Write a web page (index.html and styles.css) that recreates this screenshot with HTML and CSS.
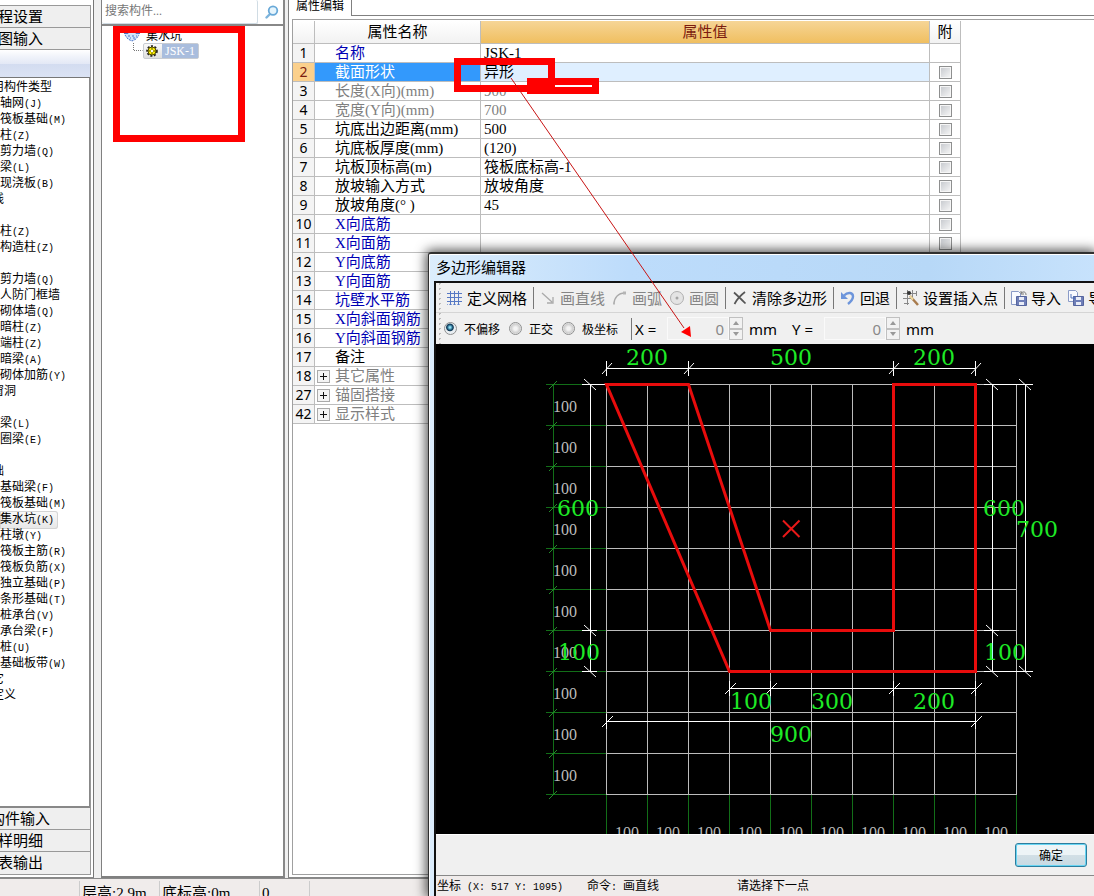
FILE: index.html
```html
<!DOCTYPE html>
<html lang="zh-CN">
<head>
<meta charset="utf-8">
<title>多边形编辑器</title>
<link rel="stylesheet" href="styles.css">
</head>
<body>
<div class="app">
  <div class="workspace">
    <nav class="sidebar" aria-label="导航">
      <div class="sidebar-box">
        <button class="side-tab">程设置</button>
        <button class="side-tab">图输入</button>
        <div class="side-band"></div>
        <ul class="type-list">
          <li class="group">用构件类型</li>
          <li>轴网<i>(J)</i></li>
          <li>筏板基础<i>(M)</i></li>
          <li>柱<i>(Z)</i></li>
          <li>剪力墙<i>(Q)</i></li>
          <li>梁<i>(L)</i></li>
          <li>现浇板<i>(B)</i></li>
          <li class="group">线</li>
          <li></li>
          <li>柱<i>(Z)</i></li>
          <li>构造柱<i>(Z)</i></li>
          <li></li>
          <li>剪力墙<i>(Q)</i></li>
          <li>人防门框墙</li>
          <li>砌体墙<i>(Q)</i></li>
          <li>暗柱<i>(Z)</i></li>
          <li>端柱<i>(Z)</i></li>
          <li>暗梁<i>(A)</i></li>
          <li>砌体加筋<i>(Y)</i></li>
          <li class="group">窗洞</li>
          <li></li>
          <li>梁<i>(L)</i></li>
          <li>圈梁<i>(E)</i></li>
          <li></li>
          <li class="group">础</li>
          <li>基础梁<i>(F)</i></li>
          <li>筏板基础<i>(M)</i></li>
          <li><span class="current">集水坑<i>(K)</i></span></li>
          <li>柱墩<i>(Y)</i></li>
          <li>筏板主筋<i>(R)</i></li>
          <li>筏板负筋<i>(X)</i></li>
          <li>独立基础<i>(P)</i></li>
          <li>条形基础<i>(T)</i></li>
          <li>桩承台<i>(V)</i></li>
          <li>承台梁<i>(F)</i></li>
          <li>桩<i>(U)</i></li>
          <li>基础板带<i>(W)</i></li>
          <li class="group">它</li>
          <li class="group">定义</li>
        </ul>
        <button class="side-tab side-tab-long">构件输入</button>
        <button class="side-tab">样明细</button>
        <button class="side-tab">表输出</button>
      </div>
    </nav>

    <section class="component-panel">
      <div class="search">
        <input class="search-input" type="text" placeholder="搜索构件..." aria-label="搜索构件">
        <button class="search-button" aria-label="搜索">
          <svg width="14" height="14" viewBox="0 0 14 14"><path d="M1.5 12.5L5 9" stroke="#7db4dc" stroke-width="2.4" stroke-linecap="round"/><circle cx="8" cy="5.6" r="4.3" fill="#e6f5fd" stroke="#69a9d8" stroke-width="1.8"/></svg>
        </button>
      </div>
      <div class="tree">
        <div class="tree-root">
          <svg width="18" height="14" viewBox="0 0 18 14"><path d="M1 4h16L14 9l-4 3H7L3 8z" fill="#cfe4fb"/><path d="M1 4.5h4l1-3h6l1 3h4" fill="none" stroke="#4c74c8"/><path d="M2 6l3 4 4 2 4-2 3-4M5 7h2m2 0h2m2 0h1M7 9h1m2 0h2" fill="none" stroke="#4c74c8" stroke-dasharray="2 1"/></svg>
          <span>集水坑</span>
        </div>
        <div class="tree-child">
          <svg class="tree-branch" width="11" height="14" viewBox="0 0 11 14"><path d="M1.5 0v7.500h9" fill="none" stroke="#777" stroke-dasharray="1 1"/></svg>
          <span class="tree-node">
            <svg width="12" height="12" viewBox="0 0 12 12"><circle cx="6" cy="6" r="4.800" fill="none" stroke="#222" stroke-width="2" stroke-dasharray="2 1.500"/><circle cx="6" cy="6" r="4" fill="#fff200" stroke="#554d00"/><path d="M6 2.500v7M2.500 6h7" stroke="#554d00"/><circle cx="6" cy="6" r="1.200" fill="#fff"/></svg>
            <span class="tree-name">JSK-1</span>
          </span>
        </div>
      </div>
    </section>

    <section class="property-panel">
      <div class="tab-row"><span class="tab">属性编辑</span><span class="tab-fill"></span></div>
      <div class="property-box">
        <table class="props">
          <colgroup><col class="c-num"><col class="c-name"><col class="c-value"><col class="c-extra"></colgroup>
          <thead><tr><th></th><th>属性名称</th><th class="value-head">属性值</th><th>附</th></tr></thead>
          <tbody>
            <tr class="link"><th>1</th><td>名称</td><td>JSK-1</td><td></td></tr>
            <tr class="selected"><th>2</th><td>截面形状</td><td>异形</td><td><input type="checkbox" aria-label="截面形状"></td></tr>
            <tr class="muted"><th>3</th><td>长度(X向)(mm)</td><td>900</td><td><input type="checkbox" aria-label="长度"></td></tr>
            <tr class="muted"><th>4</th><td>宽度(Y向)(mm)</td><td>700</td><td><input type="checkbox" aria-label="宽度"></td></tr>
            <tr><th>5</th><td>坑底出边距离(mm)</td><td>500</td><td><input type="checkbox" aria-label="坑底出边距离"></td></tr>
            <tr><th>6</th><td>坑底板厚度(mm)</td><td>(120)</td><td><input type="checkbox" aria-label="坑底板厚度"></td></tr>
            <tr><th>7</th><td>坑板顶标高(m)</td><td>筏板底标高-1</td><td><input type="checkbox" aria-label="坑板顶标高"></td></tr>
            <tr><th>8</th><td>放坡输入方式</td><td>放坡角度</td><td><input type="checkbox" aria-label="放坡输入方式"></td></tr>
            <tr><th>9</th><td>放坡角度(° )</td><td>45</td><td><input type="checkbox" aria-label="放坡角度"></td></tr>
            <tr class="link"><th>10</th><td>X向底筋</td><td></td><td><input type="checkbox" aria-label="X向底筋"></td></tr>
            <tr class="link"><th>11</th><td>X向面筋</td><td></td><td><input type="checkbox" aria-label="X向面筋"></td></tr>
            <tr class="link"><th>12</th><td>Y向底筋</td><td></td><td></td></tr>
            <tr class="link"><th>13</th><td>Y向面筋</td><td></td><td></td></tr>
            <tr class="link"><th>14</th><td>坑壁水平筋</td><td></td><td></td></tr>
            <tr class="link"><th>15</th><td>X向斜面钢筋</td><td></td><td></td></tr>
            <tr class="link"><th>16</th><td>Y向斜面钢筋</td><td></td><td></td></tr>
            <tr><th>17</th><td>备注</td><td></td><td></td></tr>
            <tr class="muted folded"><th>18</th><td><button class="expand" aria-label="展开其它属性"></button>其它属性</td><td></td><td></td></tr>
            <tr class="muted folded"><th>27</th><td><button class="expand" aria-label="展开锚固搭接"></button>锚固搭接</td><td></td><td></td></tr>
            <tr class="muted folded"><th>42</th><td><button class="expand" aria-label="展开显示样式"></button>显示样式</td><td></td><td></td></tr>
          </tbody>
        </table>
      </div>
    </section>
  </div>
  <footer class="app-status"><span></span><span>层高:2.9m</span><span>底标高:0m</span><span>0</span><span></span></footer>
</div>

<section class="dialog" role="dialog" aria-labelledby="dialog-title">
  <h1 class="dialog-title" id="dialog-title">多边形编辑器</h1>
  <div class="dialog-body">
    <div class="toolbar tools">
      <button class="tool tool-first"><svg width="16" height="16" viewBox="0 0 16 16"><path d="M4.500 1v14M8.500 1v14M12.500 1v14M1 3.500h15M1 7.500h15M1 11.500h15" stroke="#5779c4" fill="none"/><path d="M1 14.500h14" stroke="#8aa3da" stroke-dasharray="1 1"/></svg>定义网格</button>
      <span class="sep"></span>
      <button class="tool" disabled><svg width="16" height="16" viewBox="0 0 16 16"><path d="M2 3l10 9M13 7v6H7" fill="none" stroke="#aaa" stroke-width="1.300"/></svg>画直线</button>
      <button class="tool" disabled><svg width="16" height="16" viewBox="0 0 16 16"><path d="M2 14C2 8 6 3 13 3" fill="none" stroke="#aaa" stroke-width="1.300"/><path d="M11 1.500h3v3h-3zM1 12.500h2v2H1z" fill="#b5b5b5"/></svg>画弧</button>
      <button class="tool" disabled><svg width="16" height="16" viewBox="0 0 16 16"><circle cx="8" cy="8" r="6.500" fill="#e4e4e4" stroke="#b0b0b0"/><circle cx="8" cy="8" r="1.500" fill="#a5a5a5"/></svg>画圆</button>
      <span class="sep"></span>
      <button class="tool"><svg width="16" height="16" viewBox="0 0 16 16"><path d="M2 2.500C6 6 10 10 13.500 13.500M13 2C9 5 5 9 2.500 14" fill="none" stroke="#555" stroke-width="1.700"/></svg>清除多边形</button>
      <span class="sep"></span>
      <button class="tool"><svg width="16" height="16" viewBox="0 0 16 16"><path d="M4 5.500c4-4 9-3 9 1 0 3-2 5-5 7.500" fill="none" stroke="#6d95db" stroke-width="2.400"/><path d="M1 2v7h7z" fill="#6d95db"/></svg>回退</button>
      <span class="sep"></span>
      <button class="tool"><svg width="16" height="16" viewBox="0 0 16 16"><path d="M4.500 0v15M9.500 0v8M0 3.500h14M0 8.500h9M1 13.500h5M13.500 1v5" fill="none" stroke="#888"/><circle cx="6" cy="3" r="2" fill="#333"/><path d="M7 6l8 9" stroke="#a87b4d" stroke-width="2.500"/><path d="M7 6l3 3.500" stroke="#edd9a0" stroke-width="2"/></svg>设置插入点</button>
      <span class="sep"></span>
      <button class="tool"><svg width="16" height="16" viewBox="0 0 16 16"><path d="M.5 1.500h7l2 2v11h-9z" fill="#f8faff" stroke="#8a9bc7"/><path d="M5.500 6.500h10v9h-10z" fill="#6f7fb8" stroke="#55659e"/><path d="M8 7h5v3H8zM8 12h5v3H8z" fill="#e9edf8"/><path d="M10 3c3-2 5-1 5 2M10 1v3h3" fill="none" stroke="#777"/></svg>导入</button>
      <button class="tool"><svg width="16" height="16" viewBox="0 0 16 16"><path d="M.5.500h7l2 2v9h-9z" fill="#f8faff" stroke="#8a9bc7"/><path d="M5.500 6.500h10v9h-10z" fill="#6f7fb8" stroke="#55659e"/><path d="M8 7h5v3H8zM8 12h5v3H8z" fill="#e9edf8"/><path d="M3 4v4h3M5 6l2 2-2 2" fill="none" stroke="#5575bb"/></svg>导出</button>
    </div>
    <div class="toolbar options">
      <label class="radio"><input type="radio" name="offset" checked>不偏移</label>
      <label class="radio"><input type="radio" name="offset">正交</label>
      <label class="radio"><input type="radio" name="offset">极坐标</label>
      <span class="sep sep-options"></span>
      <label class="axis" for="x">X =</label>
      <span class="spin"><input id="x" type="text" value="0" disabled><span class="arrows"><button class="up" aria-label="增加 X" disabled></button><button class="down" aria-label="减少 X" disabled></button></span></span>
      <span class="unit">mm</span>
      <label class="axis" for="y">Y =</label>
      <span class="spin"><input id="y" type="text" value="0" disabled><span class="arrows"><button class="up" aria-label="增加 Y" disabled></button><button class="down" aria-label="减少 Y" disabled></button></span></span>
      <span class="unit">mm</span>
    </div>
    <div class="canvas">
      <svg class="drawing" viewBox="436 344 658 490" role="img" aria-label="集水坑截面">
        <path class="axis-line" d="M553.500 384v411M546 384.500h60m-60 41h60m-60 41h60m-60 41h60m-60 41h60m-60 41h60m-60 41h60m-60 41h60m-60 41h60m-60 41h60m-60 41h60M606.500 795v40m41-40v40m41-40v40m41-40v40m41-40v40m41-40v40m41-40v40m41-40v40m41-40v40m41-40v40m41-40v40"/>
        <path class="axis-tick" d="M549 389l8-8m-8 49l8-8m-8 49l8-8m-8 49l8-8m-8 49l8-8m-8 49l8-8m-8 49l8-8m-8 49l8-8m-8 49l8-8m-8 49l8-8m-8 49l8-8"/>
        <path class="grid-line" d="M606.500 384v411m41-411v411m41-411v411m41-411v411m41-411v411m41-411v411m41-411v411m41-411v411m41-411v411m41-411v411m41-411v411M606 384.500h411m-411 41h411m-411 41h411m-411 41h411m-411 41h411m-411 41h411m-411 41h411m-411 41h411m-411 41h411m-411 41h411m-411 41h411"/>
        <g class="grid-label">
          <text x="553" y="412">100</text><text x="553" y="453">100</text><text x="553" y="494">100</text><text x="553" y="535">100</text><text x="553" y="576">100</text><text x="553" y="617">100</text><text x="553" y="658">100</text><text x="553" y="699">100</text><text x="553" y="740">100</text><text x="553" y="781">100</text>
          <text x="615" y="838">100</text><text x="656" y="838">100</text><text x="697" y="838">100</text><text x="738" y="838">100</text><text x="779" y="838">100</text><text x="820" y="838">100</text><text x="861" y="838">100</text><text x="902" y="838">100</text><text x="943" y="838">100</text><text x="984" y="838">100</text>
        </g>
        <path class="dim-line" d="M606 368.500h370M606.500 361v15M688.500 361v15M893.500 361v15M975.500 361v15M590.500 384v288M582 384.500h24M582 630.500h15M582 671.500h15M992.500 384v288M984 384.500h49M984 630.500h15M984 671.500h49M1025.500 384v288M729 688.500h247M729.500 681v15M770.500 681v15M893.500 681v15M975.500 681v15M606 721.500h370M606.500 714v15M975.500 714v15"/>
        <path class="dim-tick" d="M602 374l10-11m72 11l10-11m195 11l10-11m72 11l10-11M584 379l12 11m-12 235l12 11m-12 30l12 11M986 379l12 11m-12 235l12 11m-12 30l12 11M1019 379l12 11m-12 276l12 11M725 694l11-11m30 11l11-11m112 11l11-11m71 11l11-11M602 727l11-11m358 11l11-11"/>
        <path class="outline" d="M606.500 384.500h82l82 246h123v-246h82v287h-246z"/>
        <path class="insert-mark" d="M783 520.500l16.500 16.500m0-16.500L783 537"/>
        <g class="dim-label">
          <text x="647" y="365">200</text><text x="791" y="365">500</text><text x="934" y="365">200</text>
          <text x="578" y="516">600</text><text x="579" y="660">100</text><text x="1004" y="516">600</text><text x="1037" y="537">700</text><text x="1005" y="660">100</text>
          <text x="751" y="709">100</text><text x="832" y="709">300</text><text x="934" y="709">200</text><text x="791" y="742">900</text>
        </g>
      </svg>
    </div>
    <div class="actions"><button class="ok">确定</button></div>
    <footer class="dialog-status"><span>坐标<i> (X: 517 Y: 1095)</i></span><span>命令<i>: </i>画直线</span><span>请选择下一点</span></footer>
  </div>
</section>

<svg class="markup" width="700" height="345" viewBox="0 0 700 345" aria-hidden="true">
  <path class="markup-box" d="M116.500 29.500h125v109h-125zM457.500 61.500h94v27h-94z"/>
  <path class="markup-fill" fill-rule="evenodd" d="M527 78h72v16h-72zM555 85v2h37v-2z"/>
  <path class="markup-line" d="M511 78L684 328"/>
  <path class="markup-fill" d="M691 337l-10-5 9-6z"/>
</svg>
</body>
</html>
```
FILE: styles.css
```css
* { box-sizing: border-box; }
body {
  margin: 0;
  overflow: hidden;
  color: #000;
  background: #f0f0f0;
  font: 15px/18px "Liberation Serif", "Noto Sans CJK SC", serif;
}
button, input { font: inherit; color: inherit; margin: 0; }
button { padding: 0; border: 0; background: none; }
svg { display: block; flex: none; }
i { font-style: normal; font-family: "Liberation Mono", monospace; font-size: 10px; white-space: pre; }

.app { display: flex; flex-direction: column; height: 100vh; }
.workspace { display: flex; flex: 1; min-height: 0; gap: 7px; border-bottom: 1px solid #8a8a8a; }

/* left navigation */
.sidebar { width: 94px; flex: none; padding: 5px 2px 2px 0; border-right: 1px solid #777; border-bottom: 1px solid #888; background: #fff; overflow: hidden; }
.sidebar-box { display: flex; flex-direction: column; height: 100%; border: 1px solid #999; border-left: 0; }
.side-tab { flex: none; height: 22px; text-indent: -2px; text-align: left; background: #efefef; border-bottom: 1px solid #999; overflow: hidden; white-space: nowrap; }
.side-tab-long { text-indent: -10px; }
.side-tab:last-child { border-bottom: 0; }
.side-band { flex: none; height: 28px; background: linear-gradient(#fff 0, #f0f3fa 25%, #e4e9f6 50%, #d3dcf0 51%, #dbe3f4 100%); border-bottom: 1px solid #777; }
.type-list { flex: 1; margin: 0; padding: 1px 0 0; list-style: none; background: #fff; border-right: 1px solid #888; border-bottom: 2px solid #888; font-size: 12px; line-height: 16px; overflow: hidden; white-space: nowrap; }
.type-list li { height: 16px; }
.type-list .group { margin-left: -8px; }
.current { display: inline-block; padding-right: 4px; background: linear-gradient(#fafafa, #e6e6e6); border-radius: 0 3px 3px 0; box-shadow: inset 0 0 0 1px #d4d4d4; }

/* component tree */
.component-panel { display: flex; flex-direction: column; width: 184px; flex: none; border: 1px solid #808080; border-top: 0; border-right: 2px solid #888; border-bottom-width: 2px; background: #fff; }
.search { display: flex; height: 26px; border-bottom: 2px solid #888; gap: 7px; align-items: center; }
.search-input { width: 156px; height: 24px; padding: 0 3px 1px; border: 1px solid #d0dce4; border-top: 0; border-left: 0; border-radius: 2px; font-size: 12px; background: #fff; }
.search-input::placeholder { color: #777; opacity: 1; }
.tree { padding: 3px 0 0 21px; font-size: 12px; line-height: 14px; }
.tree-root { display: flex; gap: 5px; align-items: center; }
.tree-child { display: flex; padding-left: 9px; }
.tree-node { display: flex; align-items: center; height: 16px; padding-left: 2px; gap: 4px; border: 1px solid #c8ccd2; border-radius: 2px; background: linear-gradient(#fafafa, #dedede); }
.tree-name { padding: 0 3px; background: #a9bddd; color: #fff; }

/* properties */
.property-panel { display: flex; flex-direction: column; flex: 1; min-width: 0; margin-left: -4px; border-left: 1px solid #808080; border-bottom: 1px solid #888; background: #fff; }
.tab-row { display: flex; height: 16px; font-size: 12px; line-height: 12px; }
.tab { width: 63px; padding-left: 7px; border-right: 1px solid #808080; }
.tab-fill { flex: 1; border-bottom: 1px solid #808080; }
.property-box { flex: 1; min-height: 0; margin: 3px 0 2px 3px; padding: 1px 0 0; border: 1px solid #a0a0a0; border-right: 0; overflow: hidden; }
.props { width: 668px; table-layout: fixed; border-collapse: separate; border-spacing: 0; }
.c-num { width: 22px; }
.c-name { width: 166px; }
.c-value { width: auto; }
.c-extra { width: 31px; }
.props th, .props td { height: 19px; padding: 0; border: 0 solid #bdbdbd; border-width: 0 1px 1px 0; font-weight: 400; text-align: left; overflow: hidden; white-space: nowrap; line-height: 18px; }
.props thead th { height: 23px; text-align: center; background: linear-gradient(#fff, #f2f2f2); }
.props thead .value-head { background: linear-gradient(#f6d596, #f0bf60); color: #7c1c10; }
.props tbody th { background: #f4f4f4; text-align: center; font: 14px/18px "Noto Sans", sans-serif; }
.props td:nth-child(2) { padding-left: 20px; }
.props td:nth-child(3) { padding-left: 3px; }
.props td:nth-child(4) { text-align: center; }
.link td:nth-child(2) { color: #0000b4; }
.muted td { color: #808080; }
.props .selected th { background: #fbd08c; color: #7c1c10; }
.selected td:nth-child(2) { background: #3399fc; color: #fff; }
.selected td:nth-child(3) { background: #dfefff; }
.props .folded td:nth-child(2) { padding-left: 2px; }
.expand { width: 13px; height: 13px; margin-right: 5px; vertical-align: -1px; border: 1px solid #aaa; background: linear-gradient(#111, #111) center / 7px 1px no-repeat, linear-gradient(#111, #111) center / 1px 7px no-repeat, #f4f4f4; }
.props input { appearance: none; display: block; width: 13px; height: 13px; margin: 0 auto; border: 1px solid #8e8f8f; box-shadow: inset 0 0 0 1px #f6f6f6; background: linear-gradient(135deg, #c4c7cc, #f8f8f8); }

.app-status { display: flex; height: 17px; padding-top: 2px; background: #f0eceb; overflow: hidden; line-height: 24px; white-space: nowrap; }
.app-status span { width: 100px; padding-left: 2px; border-right: 1px solid #ccc; }
.app-status span:nth-child(-n+2) { width: 80px; }
.app-status span:nth-child(4) { width: 50px; }
.app-status span:last-child { border: 0; }

/* polygon editor window */
.dialog { position: absolute; left: 428px; top: 252px; right: 0; bottom: 0; display: flex; flex-direction: column; padding-left: 5px; border: 2px solid #303030; border-width: 2px 0 0 1px; border-radius: 3px 0 0; background: linear-gradient(90deg, #dcedfc, #bddcfb 200px, #b7d8f7 500px, #c7e2fc); box-shadow: inset 1px 1px #fff, 0 0 12px 2px rgba(0, 0, 0, .7); }
.dialog-title { height: 27px; flex: none; margin: 0; padding-left: 2px; font: 15px/25px "Noto Sans CJK SC", sans-serif; }
.dialog-body { display: flex; flex: 1; min-height: 0; flex-direction: column; border: 2px solid #111; border-width: 2px 0 0 2px; background: #f0f0f0; }
.toolbar { display: flex; flex: none; align-items: center; white-space: nowrap; overflow: hidden; background: radial-gradient(circle, #bbb 1px, transparent 1px) 1px 3px / 5px 5px repeat-y, #f0f0f0; }
.tools { height: 30px; gap: 7px; padding-left: 10px; border-bottom: 1px solid #d5d5d5; font-family: "Noto Sans CJK SC", sans-serif; }
.tool { display: flex; flex: none; align-items: center; gap: 4px; height: 24px; }
.tool-first { gap: 5px; }
.tool:disabled { color: #858585; }
.sep { flex: none; width: 1px; height: 22px; margin: 0 -1px; background: #777; }
.options { height: 31px; padding-left: 8px; font: 15px/18px "Noto Sans", sans-serif; }
.radio { display: flex; align-items: center; gap: 7px; margin-right: 9px; font: 12px/16px "Noto Sans CJK SC", sans-serif; }
.radio input { appearance: none; width: 13px; height: 13px; border: 1px solid #8e8f8f; border-radius: 50%; background: radial-gradient(circle, #f4f4f4 20%, #ccc 60%, #fff 75%); }
.radio input:checked { background: radial-gradient(circle at 45% 40%, #8de0f5 0 8%, #12496c 32%, #163a54 38%, #e9eef2 48%); }
.sep-options { margin: 0 3px 0 4px; }
.axis { width: 32px; flex: none; }
.spin { display: flex; flex: none; width: 76px; height: 23px; margin-right: 6px; }
.spin input { width: 62px; padding: 0 4px 0 0; border: 1px solid #fafafa; background: #f0f0f0; color: #888; text-align: right; }
.arrows { display: flex; flex-direction: column; width: 14px; }
.arrows button { flex: 1; display: grid; place-items: center; border: 1px solid #c0c0c0; background: #f2f2f2; }
.arrows button::before { content: ""; border: 3px solid transparent; }
.arrows .up::before { border-top: 0; border-bottom: 4px solid #999; }
.arrows .down::before { border-bottom: 0; border-top: 4px solid #999; }
.unit { width: 43px; flex: none; }

.canvas { flex: 1; min-height: 0; background: #000; overflow: hidden; }
.drawing { width: 658px; height: 490px; }
.drawing path { fill: none; }
.axis-line { stroke: #126e18; }
.axis-tick { stroke: #228a28; }
.grid-line { stroke: #bcbcbc; }
.dim-line, .dim-tick { stroke: #fff; }
.drawing .outline { stroke: #e80c0c; stroke-width: 3; }
.insert-mark { stroke: #e81818; stroke-width: 2; }
.grid-label { fill: #bcbcbc; font: 16px "Liberation Serif", serif; }
.dim-label { fill: #1eea26; font: 22px "DejaVu Serif", serif; text-anchor: middle; }

.actions { display: flex; flex: none; justify-content: flex-end; align-items: center; height: 42px; padding-right: 7px; border-top: 1px solid #fff; border-bottom: 1px solid #888; }
.ok { width: 72px; height: 24px; border: 1px solid #2c7d9e; border-radius: 3px; background: linear-gradient(#edf4f7 48%, #d2dfe6 50%, #c8dae3); box-shadow: inset 0 0 0 1px #68d5f3; font: 12px/16px "Noto Sans CJK SC", sans-serif; }
.dialog-status { display: flex; flex: none; height: 20px; padding: 1px 1px 0; background: #f0eceb; font: 12px/18px "Liberation Serif", "Noto Sans CJK SC", serif; white-space: nowrap; }
.dialog-status span { width: 150px; }

/* red call-outs over the windows */
.markup { position: absolute; left: 0; top: 0; pointer-events: none; }
.markup-box { fill: none; stroke: #f00; stroke-width: 7; }
.markup-fill { fill: #f00; }
.markup-line { stroke: #c81414; stroke-width: 1; }
```
